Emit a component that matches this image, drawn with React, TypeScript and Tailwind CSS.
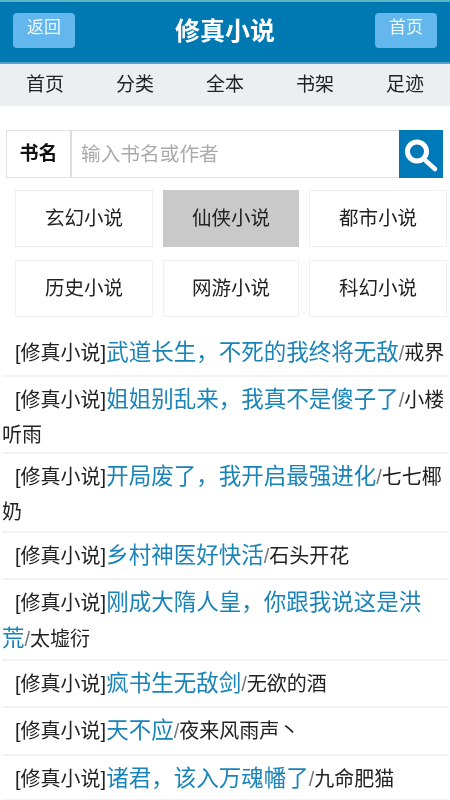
const navItems = ["首页", "分类", "全本", "书架", "足迹"];

const categories = ["玄幻小说", "仙侠小说", "都市小说", "历史小说", "网游小说", "科幻小说"];

const books = [
  { title: "武道长生，不死的我终将无敌", author: "戒界", height: "h-[47px]" },
  { title: "姐姐别乱来，我真不是傻子了", author: "小楼听雨", height: "h-[77px]" },
  { title: "开局废了，我开启最强进化", author: "七七椰奶", height: "h-[79px]" },
  { title: "乡村神医好快活", author: "石头开花", height: "h-[47px]" },
  { title: "刚成大隋人皇，你跟我说这是洪荒", author: "太墟衍", height: "h-[81px]" },
  { title: "疯书生无敌剑", author: "无欲的酒", height: "h-[47px]" },
  { title: "天不应", author: "夜来风雨声丶", height: "h-[48px]" },
  { title: "诸君，该入万魂幡了", author: "九命肥猫", height: "h-[45px]" },
];

export default function App() {
  return (
    <div className="h-[800px] w-[450px] overflow-hidden bg-white font-['Liberation_Sans','Noto_Sans_CJK_SC',sans-serif] text-[#222] blur-[0.5px]">
      <header className="flex h-[64px] items-start justify-between border-t-2 border-b-2 border-t-[#5cb8c4] border-b-[#4fa6d0] bg-[#0079b3] px-[13px] pt-[11px]">
        <button className="flex h-[35px] w-[62px] items-center justify-center rounded-[4px] bg-[#63b7ec] pb-[6px] text-[17px] text-white/90">
          返回
        </button>
        <h1 className="text-[25px] leading-[36px] font-bold text-white">修真小说</h1>
        <button className="flex h-[35px] w-[62px] items-center justify-center rounded-[4px] bg-[#63b7ec] pb-[6px] text-[17px] text-white/90">
          首页
        </button>
      </header>

      <nav className="grid h-[42px] grid-cols-5 items-center bg-[#eceff1] text-[19px] text-[#222]">
        {navItems.map((item) => (
          <a key={item} className="text-center">
            {item}
          </a>
        ))}
      </nav>

      <div className="mx-[6px] mt-[24px] flex h-[48px] w-[437px] border border-[#e2e2e2]">
        <span className="flex w-[65px] shrink-0 items-center justify-center border-r-2 border-[#dcdcdc] text-[19px] font-bold text-[#111]">
          书名
        </span>
        <span className="flex-1 pl-[9px] text-[19.7px] leading-[46px] text-[#aaa]">输入书名或作者</span>
        <span className="-mt-px -mr-px -mb-px w-[44px] bg-[#0079b9]">
          <svg width="44" height="48" viewBox="0 0 44 48" fill="none" stroke="white" strokeLinecap="round">
            <circle cx="18" cy="21.5" r="9.5" strokeWidth="5" />
            <path d="M27 31 L36 39" strokeWidth="4.5" />
          </svg>
        </span>
      </div>

      <div className="mt-[12px] ml-[15px] grid w-[432px] grid-cols-[138px_136px_138px] gap-x-[10px] gap-y-[13px]">
        {categories.map((name) => (
          <a
            key={name}
            className={
              name === "仙侠小说"
                ? "flex h-[57px] items-center justify-center bg-[#c9c9c9] text-[19.5px] text-[#222]"
                : "flex h-[57px] items-center justify-center border border-[#f0f0f0] text-[19.5px] text-[#222]"
            }
          >
            {name}
          </a>
        ))}
      </div>

      <ul className="mx-[2px] mt-[13px]">
        {books.map((book) => (
          <li
            key={book.title}
            className={`${book.height} overflow-hidden border-b-2 border-[#f3f3f3] pt-[5px] indent-[13px] text-[20px] leading-[35px] text-[#222]`}
          >
            [修真小说]
            <a className="text-[22.5px] text-[#1a84b8]">{book.title}</a>
            <span className="text-[#777]">/</span>
            {book.author}
          </li>
        ))}
      </ul>
    </div>
  );
}
